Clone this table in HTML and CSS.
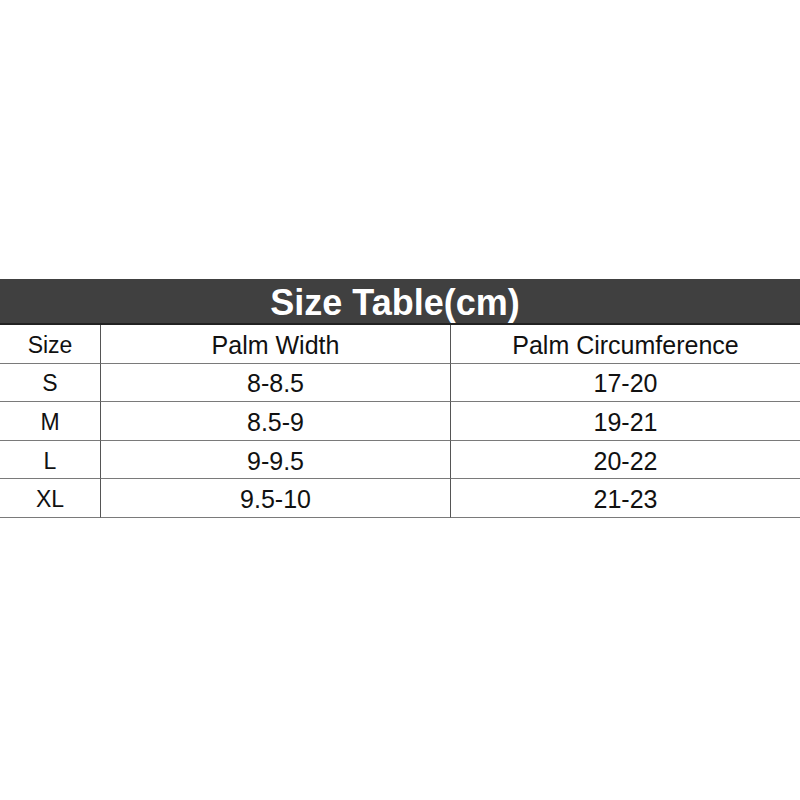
FILE: index.html
```html
<!DOCTYPE html>
<html>
<head>
<meta charset="utf-8">
<link rel="stylesheet" href="styles.css">
</head>
<body>
<div class="page">
  <div class="title">Size Table(cm)</div>
  <div class="grid">
    <div class="cell c1">Size</div><div class="cell c2">Palm Width</div><div class="cell c3">Palm Circumference</div>
    <div class="cell c1">S</div><div class="cell c2">8-8.5</div><div class="cell c3">17-20</div>
    <div class="cell c1">M</div><div class="cell c2">8.5-9</div><div class="cell c3">19-21</div>
    <div class="cell c1">L</div><div class="cell c2">9-9.5</div><div class="cell c3">20-22</div>
    <div class="cell c1">XL</div><div class="cell c2">9.5-10</div><div class="cell c3">21-23</div>
  </div>
</div>
</body>
</html>
```

FILE: styles.css
```css
html, body {
  margin: 0;
  padding: 0;
  background: #ffffff;
}
.page {
  width: 800px;
  height: 800px;
  padding-top: 279px;
  box-sizing: border-box;
  font-family: "Liberation Sans", Arial, sans-serif;
}
.title {
  height: 44px;
  background: #404040;
  border-bottom: 2px solid #222;
  color: #ffffff;
  font-weight: bold;
  font-size: 36px;
  line-height: 48px;
  text-align: center;
  padding-right: 10px;
}
.grid {
  display: grid;
  grid-template-columns: 100px 350px 350px;
  grid-auto-rows: 38.6px;
}
.cell {
  border-bottom: 1.5px solid #7a7a7a;
  display: flex;
  align-items: center;
  justify-content: center;
  font-size: 25px;
  color: #111;
  padding-top: 3px;
  box-sizing: border-box;
}
.c1 {
  font-size: 23px;
}
.c2, .c3 {
  border-left: 1.5px solid #555;
}
```
